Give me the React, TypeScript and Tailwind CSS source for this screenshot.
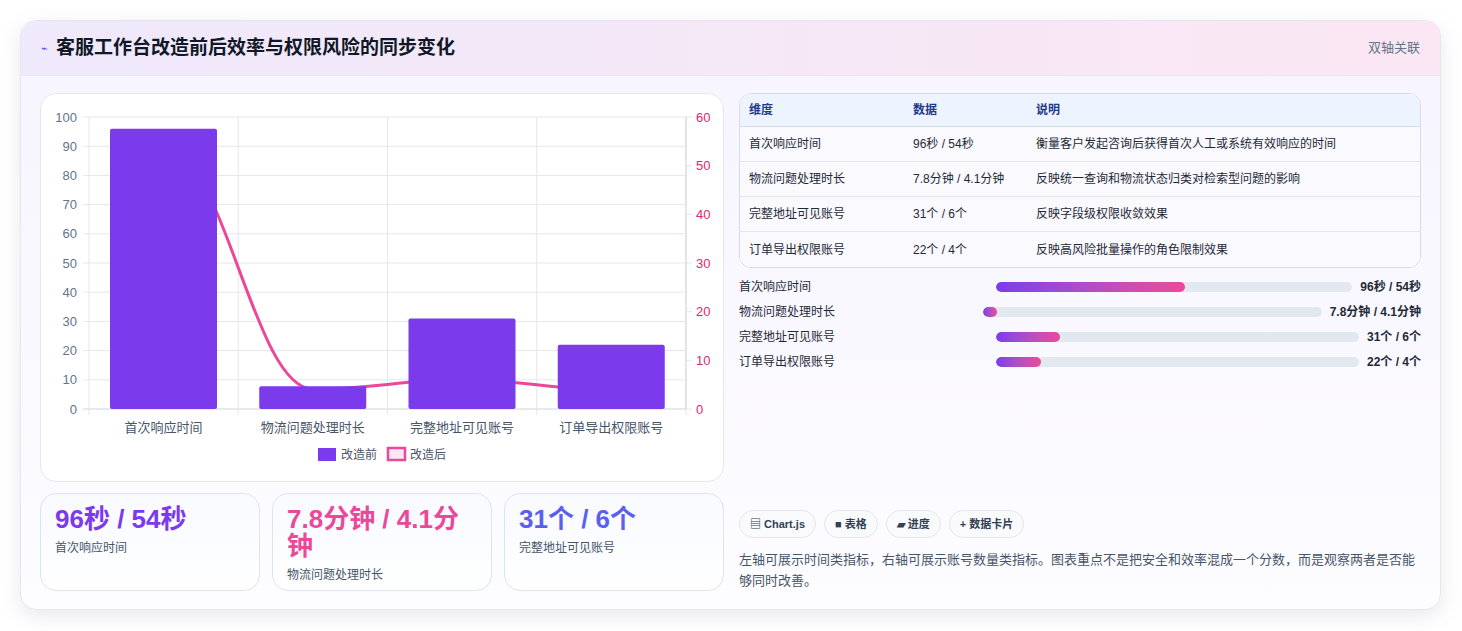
import React from "react";

const cats = ["首次响应时间", "物流问题处理时长", "完整地址可见账号", "订单导出权限账号"];
const before = [96, 7.8, 31, 22];
const after = [54, 4.1, 6, 4];

function Chart() {
  const x0 = 48, x1 = 645, yTop = 23, yBot = 315;
  const cw = (x1 - x0) / 4;
  const yl = (v: number) => yBot - (v / 100) * (yBot - yTop);
  const yr = (v: number) => yBot - (v / 60) * (yBot - yTop);
  const pts = after.map((v, i) => [x0 + cw * (i + 0.5), yr(v)]);
  let d = `M${pts[0][0]},${pts[0][1]}`;
  for (let i = 0; i < 3; i++) {
    const [ax, ay] = pts[i], [bx, by] = pts[i + 1];
    const dx = (bx - ax) * 0.4;
    const ayc = i === 0 ? ay : ay;
    d += ` C${ax + dx},${ayc} ${bx - dx},${by} ${bx},${by}`;
  }
  return (
    <svg width="684" height="389" style={{ fontFamily: "'Liberation Sans', 'Noto Sans CJK SC', sans-serif" }}>
      {[0, 10, 20, 30, 40, 50, 60, 70, 80, 90, 100].map((v) => (
        <g key={v}>
          <line x1={x0 - 6} x2={x1} y1={yl(v)} y2={yl(v)} stroke={v === 0 ? "#cbd5e1" : "#e5e7eb"} />
          <text x={x0 - 12} y={yl(v) + 4.5} textAnchor="end" fontSize="13" fill="#64748b">{v}</text>
        </g>
      ))}
      {[0, 10, 20, 30, 40, 50, 60].map((v) => (
        <g key={v}>
          <line x1={x1} x2={x1 + 6} y1={yr(v)} y2={yr(v)} stroke="#e5e7eb" />
          <text x={x1 + 10} y={yr(v) + 4.5} fontSize="13" fill="#db2777">{v}</text>
        </g>
      ))}
      {[0, 1, 2, 3, 4].map((i) => (
        <line key={i} x1={x0 + cw * i} x2={x0 + cw * i} y1={yTop} y2={yBot + 6} stroke="#e5e7eb" />
      ))}
      <line x1={x1} x2={x1} y1={yTop} y2={yBot} stroke="#d1d5db" />
      <path d={d} fill="none" stroke="#ec4899" strokeWidth="3" />
      {before.map((v, i) => (
        <rect key={i} x={x0 + cw * i + 21} y={yl(v)} width={107} height={yBot - yl(v)} rx="2" fill="#7c3aed" />
      ))}
      {cats.map((c, i) => (
        <text key={c} x={x0 + cw * (i + 0.5)} y={338} textAnchor="middle" fontSize="13" fill="#475569">{c}</text>
      ))}
      <rect x="277" y="354" width="18" height="13" fill="#7c3aed" />
      <text x="300" y="365" fontSize="12" fill="#475569">改造前</text>
      <rect x="347" y="354" width="17" height="12" fill="#fce7f3" stroke="#ec4899" strokeWidth="2.5" />
      <text x="369" y="365" fontSize="12" fill="#475569">改造后</text>
    </svg>
  );
}

const rows = [
  ["首次响应时间", "96秒 / 54秒", "衡量客户发起咨询后获得首次人工或系统有效响应的时间"],
  ["物流问题处理时长", "7.8分钟 / 4.1分钟", "反映统一查询和物流状态归类对检索型问题的影响"],
  ["完整地址可见账号", "31个 / 6个", "反映字段级权限收敛效果"],
  ["订单导出权限账号", "22个 / 4个", "反映高风险批量操作的角色限制效果"],
];

const prog = [
  { l: "首次响应时间", v: "96秒 / 54秒", w: "53%", lw: "w-[257px]" },
  { l: "物流问题处理时长", v: "7.8分钟 / 4.1分钟", w: "4%", lw: "w-[244px]" },
  { l: "完整地址可见账号", v: "31个 / 6个", w: "17.5%", lw: "w-[257px]" },
  { l: "订单导出权限账号", v: "22个 / 4个", w: "12.5%", lw: "w-[257px]" },
];

export default function App() {
  return (
    <div className="w-[1462px] h-[631px] bg-white p-5 pt-5" style={{ fontFamily: "'Liberation Sans', 'Noto Sans CJK SC', sans-serif" }}>
      <div className="w-[1421px] h-[590px] rounded-2xl border border-[#e5e7f0] bg-gradient-to-b from-[#f6f4ff] to-[#fdfcff] shadow-[0_6px_20px_rgba(100,100,150,0.15)] overflow-hidden flex flex-col">
        <div className="h-[55px] shrink-0 flex items-center justify-between px-5 bg-gradient-to-r from-[#efe9fb] to-[#fbe7f3] border-b border-[#ebe6f5]">
          <div className="flex items-center gap-2">
            <span className="text-[11px] text-[#4f46e5]">⌁</span>
            <span className="text-[19px] font-bold text-[#111827]">客服工作台改造前后效率与权限风险的同步变化</span>
          </div>
          <span className="text-[13px] text-[#64748b]">双轴关联</span>
        </div>
        <div className="flex-1 flex gap-[15px] px-[19px] pt-[17px] pb-[18px]">
          <div className="w-[684px] flex flex-col gap-[11px]">
            <div className="h-[389px] rounded-2xl bg-white border border-[#e5e7eb]"><Chart /></div>
            <div className="flex gap-[12px] flex-1">
              {[
                ["96秒 / 54秒", "首次响应时间", "text-[#7c3aed]"],
                ["7.8分钟 / 4.1分钟", "物流问题处理时长", "text-[#ec4899]"],
                ["31个 / 6个", "完整地址可见账号", "text-[#5b5ff0]"],
              ].map(([a, b, c]) => (
                <div key={b} className="flex-1 rounded-2xl border border-[#dbe4f3] bg-gradient-to-b from-[#f8faff] to-white px-[14px] pt-[12px]">
                  <div className={`text-[26px] leading-[27px] font-bold ${c}`}>{a}</div>
                  <div className="text-[12px] text-[#475569] mt-[6px]">{b}</div>
                </div>
              ))}
            </div>
          </div>
          <div className="flex-1 flex flex-col justify-between">
            <div>
              <div className="rounded-xl border border-[#d5dce8] overflow-hidden bg-white text-[12px] text-[#1f2937]">
                <div className="flex h-[33px] items-center bg-[#eef4ff] border-b border-[#d5dce8] font-bold text-[#1e3a8a] px-[9px]">
                  <div className="w-[164px]">维度</div><div className="w-[123px]">数据</div><div>说明</div>
                </div>
                {rows.map((r, i) => (
                  <div key={i} className={`flex h-[35px] items-center px-[9px] bg-[#f9f9fe] ${i < 3 ? "border-b border-[#e5e7eb]" : ""}`}>
                    <div className="w-[164px]">{r[0]}</div><div className="w-[123px]">{r[1]}</div><div>{r[2]}</div>
                  </div>
                ))}
              </div>
              <div className="flex flex-col gap-[13px] mt-[13px]">
                {prog.map((p) => (
                  <div key={p.l} className="flex items-center h-[12px] text-[12px]">
                    <div className={`${p.lw} shrink-0 text-[#1f2937]`}>{p.l}</div>
                    <div className="flex-1 h-[10px] rounded-full bg-[#e2e8f0] overflow-hidden">
                      <div className="h-full rounded-full bg-gradient-to-r from-[#7c3aed] to-[#ec4899] min-w-[14px]" style={{ width: p.w }} />
                    </div>
                    <div className="ml-[8px] font-bold text-[#1f2937]">{p.v}</div>
                  </div>
                ))}
              </div>
            </div>
            <div>
              <div className="flex gap-[8px]">
                {["▤ Chart.js", "■ 表格", "▰ 进度", "+ 数据卡片"].map((t) => (
                  <span key={t} className="h-[28px] px-[10px] flex items-center rounded-full border border-[#e5e7eb] bg-[#f8fafc] text-[11px] font-bold text-[#334155]">{t}</span>
                ))}
              </div>
              <p className="mt-[11px] text-[13px] leading-[21px] text-[#475569]">左轴可展示时间类指标，右轴可展示账号数量类指标。图表重点不是把安全和效率混成一个分数，而是观察两者是否能够同时改善。</p>
            </div>
          </div>
        </div>
      </div>
    </div>
  );
}
